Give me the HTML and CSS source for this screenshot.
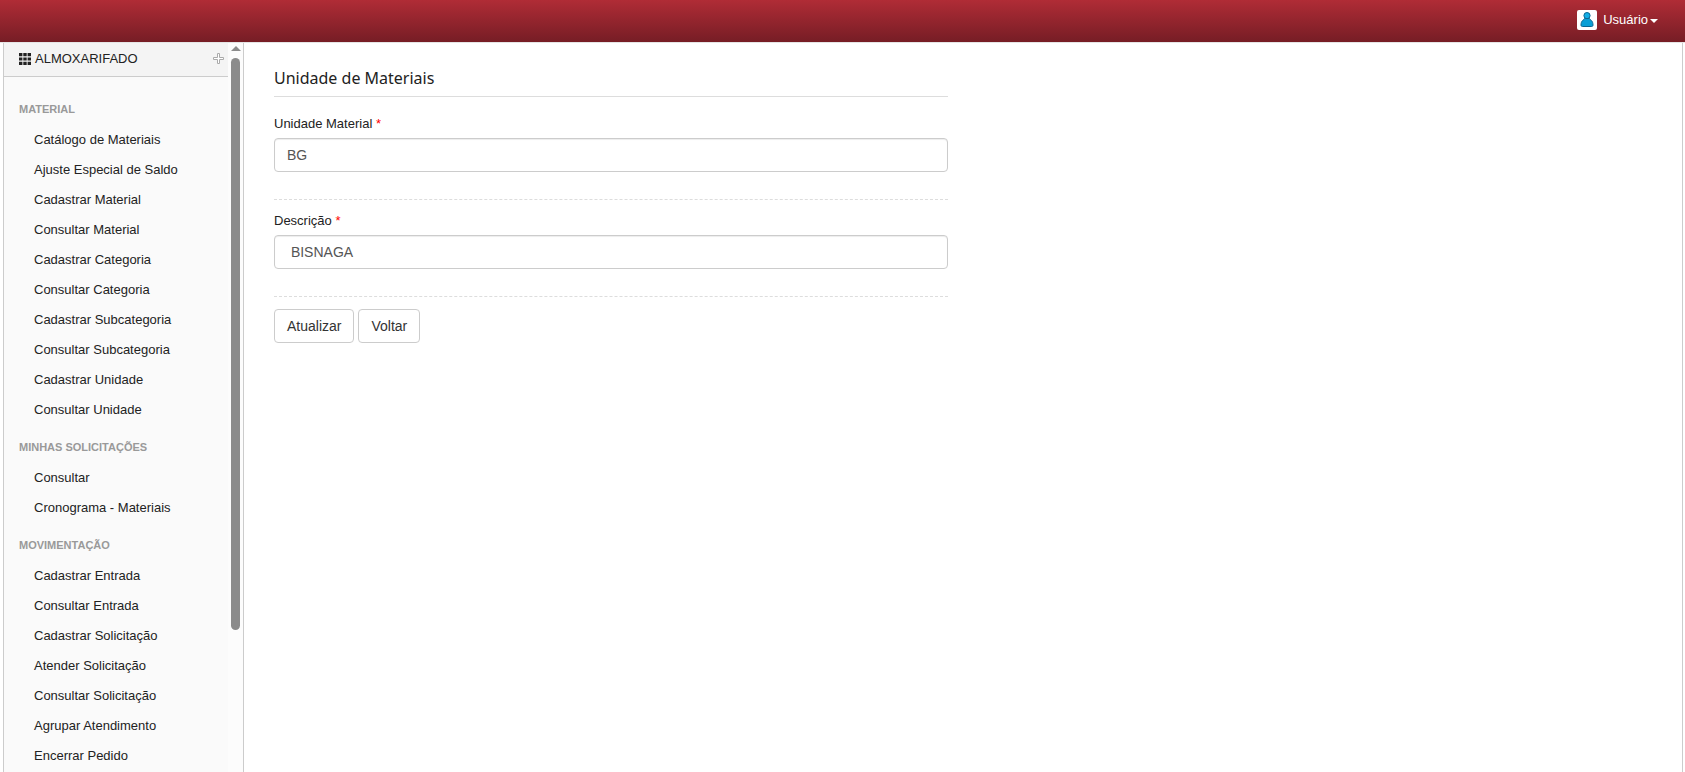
FILE: index.html
```html
<!DOCTYPE html>
<html lang="pt-BR">
<head>
<meta charset="utf-8">
<title>Unidade de Materiais</title>
<link rel="stylesheet" href="styles.css">
</head>
<body>
<header class="topbar">
  <button class="user" type="button">
    <svg class="avatar" viewBox="0 0 20 20" aria-hidden="true">
      <rect width="20" height="20" rx="2" fill="#fff"/>
      <path d="M7.500 8.500c-.3 1-1 1.300-1.800 1.900C4.600 11.300 4 13 4 15c0 1 .6 1.500 1.500 1.500h9c.9 0 1.500-.5 1.500-1.500 0-2-.6-3.700-1.700-4.600-.8-.6-1.500-.9-1.800-1.900z" fill="#0a9fd6" stroke="#0b6590"/>
      <circle cx="10" cy="5.600" r="3.100" fill="#12aee6" stroke="#0b6590"/>
    </svg>
    <span>Usuário</span>
    <span class="caret"></span>
  </button>
</header>
<div class="shell">
  <aside class="sidebar">
    <nav class="menu">
      <div class="module">
        <svg class="grid-icon" viewBox="0 0 12 12" aria-hidden="true"><path d="M0 0h3.400v3.200H0zM4.300 0h3.400v3.200H4.300zM8.600 0H12v3.200H8.600zM0 4.400h3.400v3.200H0zM4.300 4.400h3.400v3.200H4.300zM8.600 4.400H12v3.200H8.600zM0 8.800h3.400V12H0zM4.300 8.800h3.400V12H4.300zM8.600 8.800H12V12H8.600z" fill="#222"/></svg>
        <span>ALMOXARIFADO</span>
        <svg class="plus-icon" viewBox="0 0 11 11" aria-hidden="true"><path d="M4.500.5h2v4h4v2h-4v4h-2v-4h-4v-2h4z" fill="#fff" stroke="#aaa"/></svg>
      </div>
      <div class="groups">
        <h2>MATERIAL</h2>
        <ul>
          <li><a href="#">Catálogo de Materiais</a></li>
          <li><a href="#">Ajuste Especial de Saldo</a></li>
          <li><a href="#">Cadastrar Material</a></li>
          <li><a href="#">Consultar Material</a></li>
          <li><a href="#">Cadastrar Categoria</a></li>
          <li><a href="#">Consultar Categoria</a></li>
          <li><a href="#">Cadastrar Subcategoria</a></li>
          <li><a href="#">Consultar Subcategoria</a></li>
          <li><a href="#">Cadastrar Unidade</a></li>
          <li><a href="#">Consultar Unidade</a></li>
        </ul>
        <h2>MINHAS SOLICITAÇÕES</h2>
        <ul>
          <li><a href="#">Consultar</a></li>
          <li><a href="#">Cronograma - Materiais</a></li>
        </ul>
        <h2>MOVIMENTAÇÃO</h2>
        <ul>
          <li><a href="#">Cadastrar Entrada</a></li>
          <li><a href="#">Consultar Entrada</a></li>
          <li><a href="#">Cadastrar Solicitação</a></li>
          <li><a href="#">Atender Solicitação</a></li>
          <li><a href="#">Consultar Solicitação</a></li>
          <li><a href="#">Agrupar Atendimento</a></li>
          <li><a href="#">Encerrar Pedido</a></li>
        </ul>
      </div>
    </nav>
    <div class="scroll" aria-hidden="true">
      <span class="scroll-up"></span>
      <span class="scroll-thumb"></span>
      <span class="scroll-rest"></span>
    </div>
  </aside>
  <main class="content">
    <form class="form">
      <h1>Unidade de Materiais</h1>
      <div class="field">
        <label for="unidade">Unidade Material <span class="required">*</span></label>
        <input id="unidade" type="text" value="BG">
      </div>
      <div class="field">
        <label for="descricao">Descrição <span class="required">*</span></label>
        <input id="descricao" type="text" value=" BISNAGA">
      </div>
      <div class="actions">
        <button type="button">Atualizar</button>
        <button type="button">Voltar</button>
      </div>
    </form>
  </main>
</div>
</body>
</html>
```
FILE: styles.css
```css
* {
  box-sizing: border-box;
}

body {
  display: flex;
  flex-direction: column;
  height: 100vh;
  margin: 0;
  overflow: hidden;
  background: #fff;
  color: #222;
  font: 13px/20px "Liberation Sans", Arial, sans-serif;
}

.topbar {
  display: flex;
  flex: none;
  justify-content: flex-end;
  align-items: center;
  height: 43px;
  padding: 0 27px 2px;
  background: linear-gradient(#b02c36, #761d25);
  border-bottom: 1px solid #e5e5e5;
}

.user {
  display: flex;
  align-items: center;
  padding: 0;
  border: 0;
  background: none;
  color: #fff;
  font: inherit;
}

.avatar {
  width: 20px;
  height: 20px;
  margin-right: 6px;
}

.caret {
  margin: 2px 0 0 2px;
  border: 4px solid transparent;
  border-top-color: #fff;
  border-bottom: 0;
}

.shell {
  display: flex;
  flex: 1;
  min-height: 0;
  margin: 0 2px 0 3px;
  border: solid #ccc;
  border-width: 0 1px;
}

.sidebar {
  display: flex;
  flex: none;
  width: 240px;
  background: #fafafa;
  border-right: 1px solid #ccc;
}

.menu {
  flex: 1;
  overflow: hidden;
}

.module {
  display: flex;
  align-items: center;
  height: 34px;
  padding: 0 4px 2px 15px;
  background: #f4f4f4;
  border-bottom: 1px solid #ccc;
}

.grid-icon {
  width: 12px;
  height: 12px;
  margin-right: 4px;
}

.plus-icon {
  width: 11px;
  height: 11px;
  margin-left: auto;
}

.groups {
  padding: 22px 0 0 15px;
}

.menu h2 {
  margin: 0;
  color: #999;
  font-size: 11px;
  line-height: 20px;
}

.menu ul {
  margin: 0 0 12px;
  padding: 6px 0 0 15px;
  list-style: none;
}

.menu a {
  display: block;
  color: #222;
  line-height: 30px;
  text-decoration: none;
  white-space: nowrap;
}

.scroll {
  display: flex;
  flex-direction: column;
  align-items: center;
  width: 15px;
  padding-top: 3px;
  background: #fcfcfc;
}

.scroll-up {
  margin-bottom: 7px;
  border: 5px solid transparent;
  border-top: 0;
  border-bottom-color: #8b8b8b;
}

.scroll-thumb {
  flex: 572;
  width: 9px;
  border-radius: 5px;
  background: #8b8b8b;
}

.scroll-rest {
  flex: 142;
}

.content {
  flex: 1;
  padding: 22px 15px;
}

.form {
  width: 50%;
  padding: 0 15px;
}

.form h1 {
  margin: 0 0 17px;
  padding-bottom: 5px;
  border-bottom: 1px solid #ddd;
  font: 16px/26px "Noto Sans", sans-serif;
}

.field {
  margin-bottom: 11px;
  padding-bottom: 27px;
  border-bottom: 1px dashed #ddd;
}

.field label {
  display: block;
  margin-bottom: 4px;
}

.required {
  color: #f00;
}

.field input {
  display: block;
  width: 100%;
  height: 34px;
  padding: 6px 12px;
  border: 1px solid #ccc;
  border-radius: 4px;
  box-shadow: inset 0 1px 1px rgba(0, 0, 0, 0.075);
  background: #fff;
  color: #555;
  font: 14px/20px "Liberation Sans", Arial, sans-serif;
}

.actions {
  display: flex;
  gap: 4px;
  padding-top: 1px;
}

.actions button {
  padding: 6px 12px;
  border: 1px solid #ccc;
  border-radius: 4px;
  background: #fff;
  color: #333;
  font: 14px/20px "Liberation Sans", Arial, sans-serif;
}
```
